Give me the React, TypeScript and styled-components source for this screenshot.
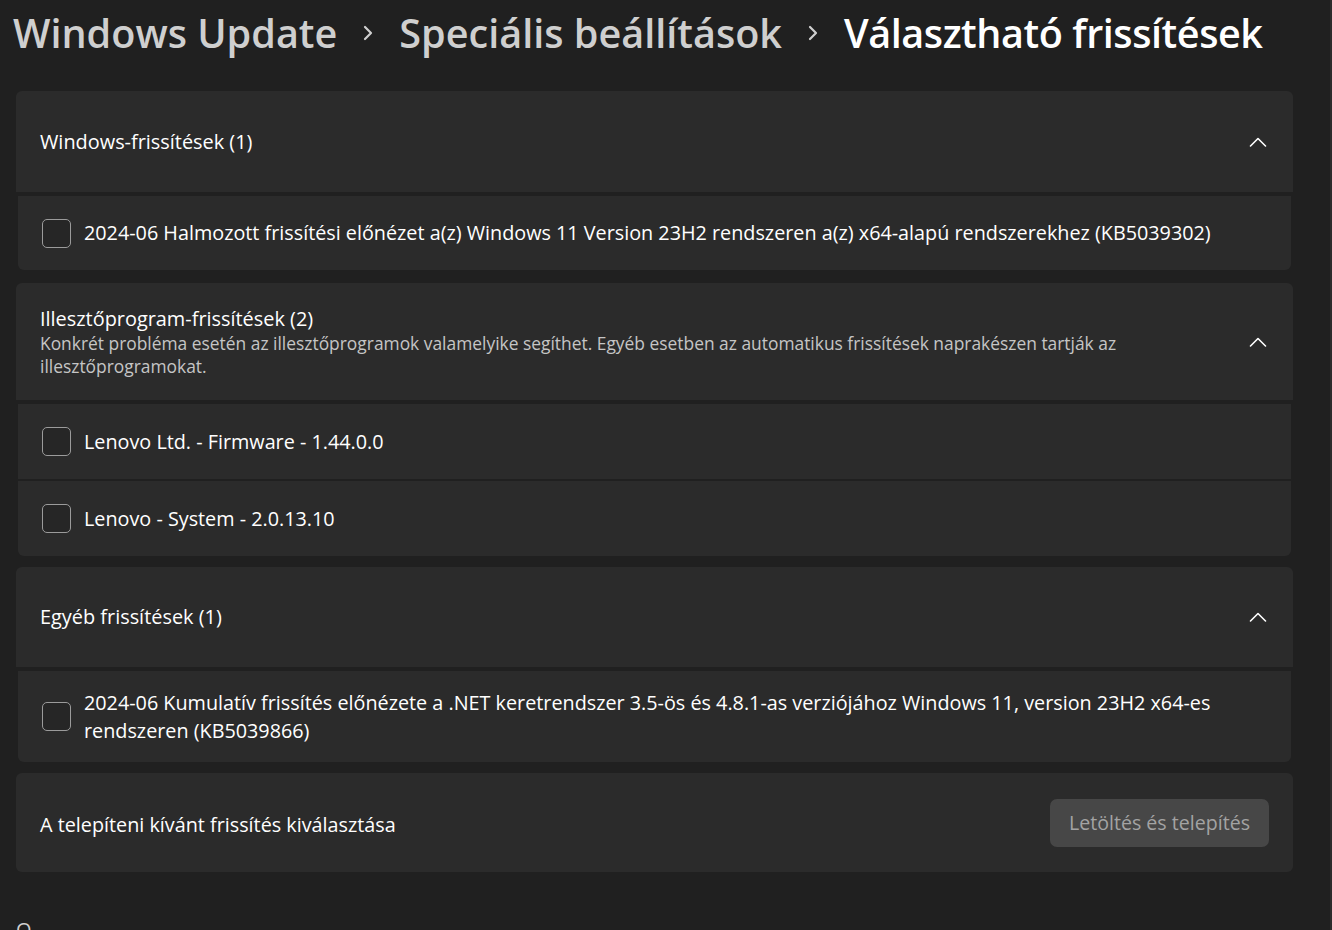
import React from 'react'
import styled, { createGlobalStyle } from 'styled-components'

const GlobalStyle = createGlobalStyle`
  html, body {
    margin: 0;
    padding: 0;
    background: #202020;
    height: 100%;
    overflow: hidden;
  }
  body {
    font-family: "Open Sans", "Noto Sans", "Liberation Sans", sans-serif;
    color: #ffffff;
  }
`

const Page = styled.div`
  width: 1332px;
  height: 930px;
  box-sizing: border-box;
  padding: 0 37px 0 16px;
  background: #202020;
  border-right: 2px solid #2c2c2c;
  overflow: hidden;
`

const Breadcrumb = styled.div`
  display: flex;
  align-items: center;
  height: 66px;
  margin-left: -3px;
  font-size: 39.6px;
  font-weight: 600;
  white-space: nowrap;
`

const Crumb = styled.span<{ $current?: boolean }>`
  color: ${p => (p.$current ? '#ffffff' : '#cfcfcf')};
  letter-spacing: ${p => (p.$current ? '-0.45px' : '0')};
`

const CrumbSep = styled.span`
  display: inline-flex;
  width: 62px;
  justify-content: center;
  color: #cfcfcf;
`

const Stack = styled.div`
  display: flex;
  flex-direction: column;
  margin-top: 25px;
`

const Group = styled.section`
  display: flex;
  flex-direction: column;
  gap: 2px;
  margin-bottom: 13px;
  &:nth-of-type(n + 2) {
    margin-bottom: 11px;
  }
`

const Header = styled.div<{ $h: number }>`
  display: flex;
  align-items: center;
  min-height: ${p => p.$h}px;
  box-sizing: border-box;
  padding: 0 24px;
  margin-bottom: 2px;
  background: #2b2b2b;
  border-radius: 6px 6px 0 0;
`

const HeaderText = styled.div`
  flex: 1;
  display: flex;
  flex-direction: column;
`

const Title = styled.div`
  font-size: 19.9px;
  line-height: 26px;
  color: #ffffff;
`

const Desc = styled.div`
  font-size: 17.4px;
  line-height: 23px;
  color: #c5c5c5;
  max-width: 1100px;
`

const Chevron = styled.svg`
  width: 18px;
  height: 10px;
  margin-right: 2px;
  flex: none;
`

const Item = styled.label<{ $h: number; $last?: boolean }>`
  display: flex;
  align-items: center;
  gap: 13px;
  min-height: ${p => p.$h}px;
  box-sizing: border-box;
  margin: 0 2px;
  padding: 0 22px 0 24px;
  background: #2b2b2b;
  border-radius: ${p => (p.$last ? '0 0 6px 6px' : '0')};
`

const Box = styled.span`
  width: 29px;
  height: 29px;
  box-sizing: border-box;
  border: 1.5px solid #9b9b9b;
  border-radius: 5px;
  background: #262626;
  flex: none;
`

const ItemText = styled.div`
  font-size: 19.8px;
  line-height: 28px;
  color: #ffffff;
`

const Footer = styled.div`
  display: flex;
  align-items: center;
  justify-content: space-between;
  height: 99px;
  box-sizing: border-box;
  padding: 0 24px;
  background: #2b2b2b;
  border-radius: 6px;
`

const FooterText = styled.div`
  font-size: 19.8px;
  color: #ffffff;
  margin-top: 3px;
`

const Button = styled.button`
  width: 219px;
  height: 48px;
  border: none;
  border-radius: 7px;
  background: #474747;
  color: #a3a3a3;
  font-family: inherit;
  font-size: 19.6px;
`

const Cut = styled.div`
  margin-top: 44px;
  font-size: 20px;
  color: #cfcfcf;
`

const ChevronUp = () => (
  <Chevron viewBox="0 0 18 10">
    <path d="M1.5 9 L9 1.5 L16.5 9" fill="none" stroke="#ffffff" strokeWidth="1.6" strokeLinecap="round" strokeLinejoin="round" />
  </Chevron>
)

const CrumbChevron = () => (
  <svg width="12" height="18" viewBox="0 0 12 18">
    <path d="M3 3 L9 9 L3 15" fill="none" stroke="#cfcfcf" strokeWidth="2.2" strokeLinecap="round" strokeLinejoin="round" />
  </svg>
)

type UpdateGroup = {
  title: string
  desc?: string
  headerH: number
  items: { text: string; h: number }[]
}

const groups: UpdateGroup[] = [
  {
    title: 'Windows-frissítések (1)',
    headerH: 101,
    items: [
      {
        text: '2024-06 Halmozott frissítési előnézet a(z) Windows 11 Version 23H2 rendszeren a(z) x64-alapú rendszerekhez (KB5039302)',
        h: 74,
      },
    ],
  },
  {
    title: 'Illesztőprogram-frissítések (2)',
    desc: 'Konkrét probléma esetén az illesztőprogramok valamelyike segíthet. Egyéb esetben az automatikus frissítések naprakészen tartják az illesztőprogramokat.',
    headerH: 117,
    items: [
      { text: 'Lenovo Ltd. - Firmware - 1.44.0.0', h: 75 },
      { text: 'Lenovo - System - 2.0.13.10', h: 75 },
    ],
  },
  {
    title: 'Egyéb frissítések (1)',
    headerH: 100,
    items: [
      {
        text: '2024-06 Kumulatív frissítés előnézete a .NET keretrendszer 3.5-ös és 4.8.1-as verziójához Windows 11, version 23H2 x64-es rendszeren (KB5039866)',
        h: 91,
      },
    ],
  },
]

export default function App() {
  return (
    <>
      <GlobalStyle />
      <Page>
        <Breadcrumb>
          <Crumb>Windows Update</Crumb>
          <CrumbSep><CrumbChevron /></CrumbSep>
          <Crumb>Speciális beállítások</Crumb>
          <CrumbSep><CrumbChevron /></CrumbSep>
          <Crumb $current>Választható frissítések</Crumb>
        </Breadcrumb>
        <Stack>
          {groups.map(g => (
            <Group key={g.title}>
              <Header $h={g.headerH}>
                <HeaderText>
                  <Title>{g.title}</Title>
                  {g.desc && <Desc>{g.desc}</Desc>}
                </HeaderText>
                <ChevronUp />
              </Header>
              {g.items.map((it, i) => (
                <Item key={it.text} $h={it.h} $last={i === g.items.length - 1}>
                  <Box />
                  <ItemText>{it.text}</ItemText>
                </Item>
              ))}
            </Group>
          ))}
          <Footer>
            <FooterText>A telepíteni kívánt frissítés kiválasztása</FooterText>
            <Button>Letöltés és telepítés</Button>
          </Footer>
          <Cut>O</Cut>
        </Stack>
      </Page>
    </>
  )
}
